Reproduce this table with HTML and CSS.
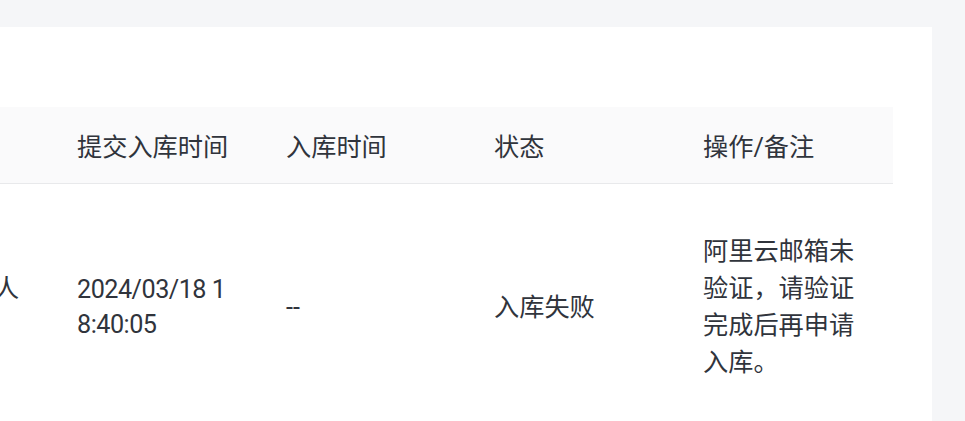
FILE: index.html
```html
<!DOCTYPE html>
<html lang="zh-CN">
<head>
<meta charset="utf-8">
<title>入库记录</title>
<link rel="stylesheet" href="styles.css">
</head>
<body>
<div class="page">
  <div class="panel">
    <div class="table-wrap">
      <table class="records">
        <colgroup>
          <col class="c1"><col class="c2"><col class="c3"><col class="c4"><col class="c5">
        </colgroup>
        <thead>
          <tr>
            <th>申请人</th>
            <th>提交入库时间</th>
            <th>入库时间</th>
            <th>状态</th>
            <th>操作/备注</th>
          </tr>
        </thead>
        <tbody>
          <tr>
            <td>管理员联系人测试</td>
            <td class="date">2024/03/18 18:40:05</td>
            <td>--</td>
            <td>入库失败</td>
            <td>阿里云邮箱未验证，请验证完成后再申请入库。</td>
          </tr>
        </tbody>
      </table>
    </div>
  </div>
</div>
</body>
</html>
```

FILE: styles.css
```css
html, body {
  margin: 0;
  padding: 0;
}
body {
  background: #f5f6f8;
  font-family: Roboto, "Noto Sans CJK SC", sans-serif;
  color: #30343c;
  overflow: hidden;
}
.page {
  padding: 27px 33px 0 0;
  height: 421px;
  box-sizing: border-box;
}
.panel {
  background: #ffffff;
  height: 394px;
  padding: 80px 39px 0 0;
  box-sizing: border-box;
  overflow: hidden;
}
.table-wrap {
  overflow: hidden;
}
.records {
  border-collapse: collapse;
  table-layout: fixed;
  width: 1053px;
  margin-left: -160px;
  font-size: 25.2px;
  line-height: 37px;
}
.c1 { width: 209px; }
.c2 { width: 209px; }
.c3 { width: 208px; }
.c4 { width: 209px; }
.c5 { width: 218px; }
.records th {
  background: #fafafb;
  font-weight: 400;
  text-align: left;
  padding: 22px 28px 17px 28px;
  border-bottom: 1px solid #e8e9eb;
  white-space: nowrap;
}
.records td {
  padding: 49px 28px;
  vertical-align: middle;
  word-break: break-all;
  text-align: left;
}
.records td.date {
  letter-spacing: -0.5px;
  line-height: 35px;
}
```
